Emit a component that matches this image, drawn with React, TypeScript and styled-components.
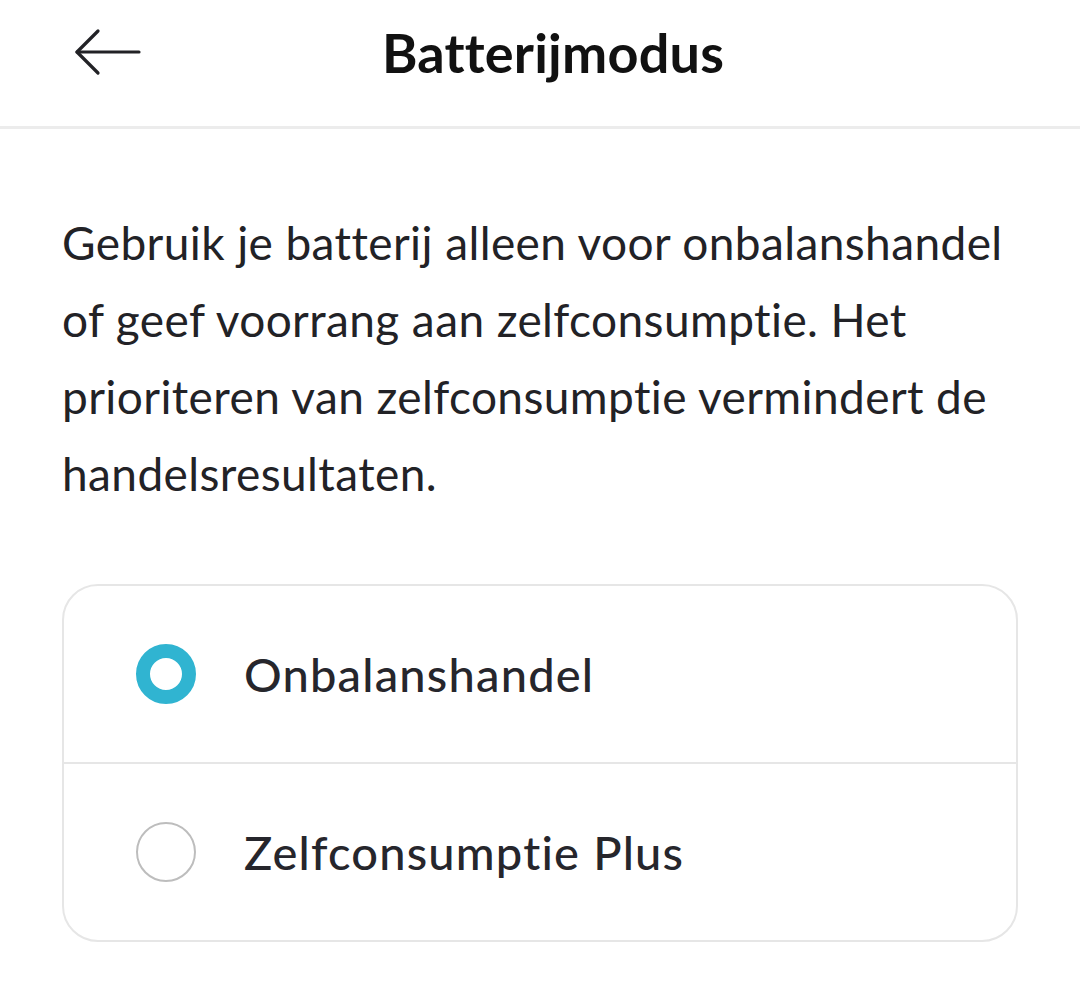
import React, { useState } from 'react';
import styled, { createGlobalStyle } from "styled-components";

const GlobalStyle = createGlobalStyle`
  body {
    margin: 0;
    background: #ffffff;
    font-family: Lato, "Open Sans", sans-serif;
    color: #222226;
  }
`

const Page = styled.div`
  width: 100%;
  min-height: 100vh;
  background: #ffffff;
`
const Header = styled.header`
  box-sizing: border-box;
  height: 129px;
  padding-bottom: 22px;
  border-bottom: 3px solid #ececec;
  display: grid;
  grid-template-columns: 200px 1fr 200px;
  align-items: center;
`
const BackButton = styled.button`
  background: none;
  border: none;
  padding: 0 0 0 74px;
  display: flex;
  align-items: center;
  cursor: pointer;
  color: #222226;
`
const Title = styled.h1`
  margin: 0;
  text-align: center;
  font-size: 54px;
  font-weight: 700;
  color: #111;
  padding-left: 26px;
  letter-spacing: 0.2px;
`
const Content = styled.main`
  padding: 0 62px;
`
const Intro = styled.p`
  margin: 0;
  padding-top: 75px;
  font-size: 46px;
  line-height: 77px;
  letter-spacing: 0.4px;
  font-weight: 400;
  color: #222226;
`
const Options = styled.ul`
  list-style: none;
  margin: 72px 0 0;
  padding: 0;
  border: 2px solid #e6e6e6;
  border-radius: 36px;
  overflow: hidden;
`
const Option = styled.li`
  height: 176px;
  display: flex;
  align-items: center;
  gap: 48px;
  padding-left: 72px;
  cursor: pointer;
  & + & {
    border-top: 2px solid #e6e6e6;
  }
`
const Radio = styled.span<{ $checked: boolean }>`
  box-sizing: border-box;
  width: 60px;
  height: 60px;
  border-radius: 50%;
  flex-shrink: 0;
  border: ${p => p.$checked ? '14px solid #30b4d1' : '2px solid #bdbdbd'};
  background: #fff;
`
const Label = styled.span`
  font-size: 47px;
  letter-spacing: 1.2px;
  font-weight: 500;
  color: #26262c;
`

const ArrowLeft = () => (
    <svg width="68" height="48" viewBox="0 0 68 48" fill="none" stroke="currentColor"
         strokeWidth="3.2" strokeLinecap="round" strokeLinejoin="round">
        <path d="M3 24 H65"/>
        <path d="M24 3 L3 24 L24 45"/>
    </svg>
)

const options: string[] = ['Onbalanshandel', 'Zelfconsumptie Plus']

const App: React.FC = () => {
    const [selected, setSelected] = useState(0)

    return (
        <Page>
            <GlobalStyle/>
            <Header>
                <BackButton aria-label="Terug"><ArrowLeft/></BackButton>
                <Title>Batterijmodus</Title>
                <div/>
            </Header>
            <Content>
                <Intro>
                    Gebruik je batterij alleen voor onbalanshandel of geef voorrang aan zelfconsumptie. Het
                    prioriteren van zelfconsumptie vermindert de handelsresultaten.
                </Intro>
                <Options>
                    {options.map((item, i) => (
                        <Option key={item} onClick={() => setSelected(i)}>
                            <Radio $checked={selected === i}/>
                            <Label>{item}</Label>
                        </Option>
                    ))}
                </Options>
            </Content>
        </Page>
    );
};
export default App;
